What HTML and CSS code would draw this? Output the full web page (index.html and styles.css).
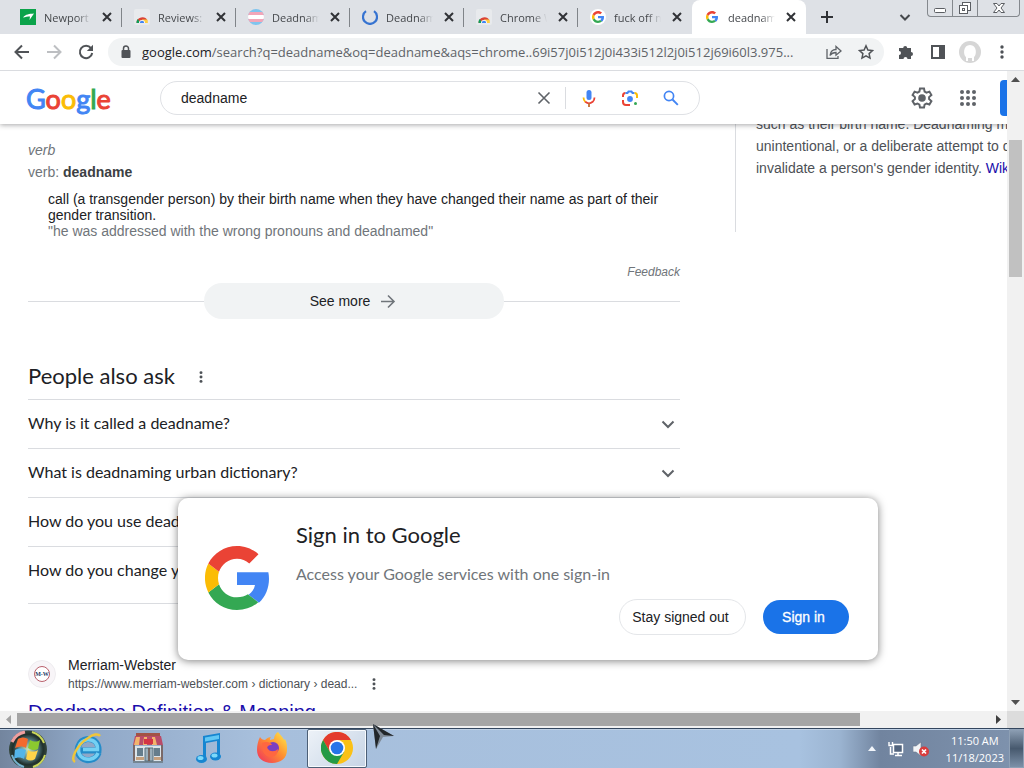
FILE: index.html
```html
<!DOCTYPE html>
<html lang="en">
<head>
<meta charset="utf-8">
<title>deadname - Google Search</title>
<link rel="stylesheet" href="styles.css">
</head>
<body>
<svg width="0" height="0" class="defs" aria-hidden="true">
  <symbol id="g" viewBox="0 0 48 48">
    <path fill="#4285f4" d="M24 19.6h23.5c.3 1.500.5 3.100.5 4.900 0 7-2.500 13.500-7.600 18l-7.700-6c2.500-1.700 4.200-4.200 4.800-7.300H24z"/>
    <path fill="#34a853" d="M24 48c6.500 0 11.900-2.100 15.900-5.800l-7.700-6c-2.100 1.400-4.900 2.300-8.200 2.300-6.300 0-11.600-4.200-13.500-9.900l-8 6.200C6.500 42.600 14.600 48 24 48z"/>
    <path fill="#fbbc05" d="M10.500 28.600c-1-3-1-6.200 0-9.200l-8-6.200c-3.400 6.800-3.400 14.800 0 21.600z"/>
    <path fill="#ea4335" d="M24 9.500c3.500 0 6.700 1.200 9.200 3.600l6.900-6.900C35.900 2.400 30.500 0 24 0 14.600 0 6.500 5.400 2.500 13.200l8 6.200C12.400 13.700 17.700 9.500 24 9.500z"/>
  </symbol>
  <symbol id="x" viewBox="0 0 16 16"><path d="M4 4l8 8M12 4l-8 8" stroke="#303236" stroke-width="2" fill="none"/></symbol>
  <symbol id="store" viewBox="0 0 16 16">
    <rect width="16" height="16" rx="2" fill="#e8eaed"/>
    <path d="M2.500 14a5.800 5.800 0 0 1 11-2.500L8 12z" fill="#db4437"/><path d="M2.500 14a5.800 5.800 0 0 1 1-4l3.500 4z" fill="#0f9d58"/><path d="M8 10.500h5.200a5.800 5.800 0 0 1 .6 3.500H9z" fill="#ffcd40"/>
    <path d="M5 14a3 3 0 0 1 6 0z" fill="#fff"/><path d="M5.800 14a2.200 2.200 0 0 1 4.400 0z" fill="#4285f4"/>
  </symbol>
  <symbol id="dots" viewBox="0 0 16 16"><g fill="#4d5156"><circle cx="8" cy="3" r="1.700"/><circle cx="8" cy="8" r="1.700"/><circle cx="8" cy="13" r="1.700"/></g></symbol>
  <symbol id="chev" viewBox="0 0 16 16"><path d="M2.500 5.500L8 11l5.500-5.500" stroke="#5f6368" stroke-width="2" fill="none"/></symbol>
</svg>

<div class="tabstrip">
  <div class="tab"><svg class="icon16" viewBox="0 0 16 16"><rect width="16" height="16" fill="#0ba34a"/><path d="M3 8.500C6 5 9 5 14 4.500L9.500 11l.5-3.500C7.500 7.500 5.500 8 3 8.500z" fill="#fff"/></svg><span class="tab-title">Newport</span><button class="close" aria-label="Close tab"><svg class="icon16"><use href="#x"/></svg></button></div>
  <div class="tab"><svg class="icon16"><use href="#store"/></svg><span class="tab-title">Reviews:</span><button class="close" aria-label="Close tab"><svg class="icon16"><use href="#x"/></svg></button></div>
  <div class="tab"><svg class="icon16" viewBox="0 0 16 16"><clipPath id="r"><circle cx="8" cy="8" r="8"/></clipPath><g clip-path="url(#r)"><rect width="16" height="16" fill="#7fc4ee"/><rect y="3" width="16" height="10" fill="#f2a6b8"/><rect y="6" width="16" height="4" fill="#fff"/></g></svg><span class="tab-title">Deadnam</span><button class="close" aria-label="Close tab"><svg class="icon16"><use href="#x"/></svg></button></div>
  <div class="tab"><svg class="icon16" viewBox="0 0 16 16"><path d="M4 2.200A7 7 0 1 0 12 2.200" stroke="#3673d1" stroke-width="2.200" fill="none"/></svg><span class="tab-title">Deadnam</span><button class="close" aria-label="Close tab"><svg class="icon16"><use href="#x"/></svg></button></div>
  <div class="tab"><svg class="icon16"><use href="#store"/></svg><span class="tab-title">Chrome W</span><button class="close" aria-label="Close tab"><svg class="icon16"><use href="#x"/></svg></button></div>
  <div class="tab"><svg class="icon16" viewBox="0 0 16 16"><circle cx="8" cy="8" r="8" fill="#fff"/><use href="#g" x="2" y="2" width="12" height="12"/></svg><span class="tab-title">fuck off m</span><button class="close" aria-label="Close tab"><svg class="icon16"><use href="#x"/></svg></button></div>
  <div class="tab active"><svg class="icon16" viewBox="0 0 16 16"><use href="#g" x="2" y="2" width="12" height="12"/></svg><span class="tab-title">deadnam</span><button class="close" aria-label="Close tab"><svg class="icon16"><use href="#x"/></svg></button></div>
  <button class="newtab" aria-label="New tab"><svg class="icon16" viewBox="0 0 16 16"><path d="M8 2v12M2 8h12" stroke="#303236" stroke-width="2"/></svg></button>
  <button class="tabsearch" aria-label="Search tabs"><svg class="icon16" viewBox="0 0 16 16"><path d="M3.500 6L8 10.500 12.500 6" stroke="#45484c" stroke-width="2" fill="none"/></svg></button>
  <div class="winctl">
    <button aria-label="Minimize"><svg width="14" height="14" viewBox="0 0 14 14"><rect x="1.500" y="7.500" width="11" height="4" rx="1" fill="#fff" stroke="#5b5e63"/></svg></button>
    <button aria-label="Restore"><svg width="14" height="14" viewBox="0 0 14 14" fill="#fff" stroke="#5b5e63"><rect x="4.500" y="1.500" width="8" height="8"/><rect x="1.500" y="4.500" width="8" height="8"/><rect x="4.500" y="7.500" width="2" height="2"/></svg></button>
    <button aria-label="Close"><svg width="14" height="14" viewBox="0 0 14 14"><path d="M1.500 2.500h3.500l2 2.500 2-2.500h3.500L9 7l3.500 4.500H9L7 9l-2 2.500H1.500L5 7z" fill="#fff" stroke="#5b5e63"/></svg></button>
  </div>
</div>

<div class="toolbar">
  <button aria-label="Back"><svg class="icon16" viewBox="0 0 16 16"><path d="M15 8H2M8 1.500L1.500 8 8 14.500" stroke="#505357" stroke-width="2" fill="none"/></svg></button>
  <button aria-label="Forward"><svg class="icon16" viewBox="0 0 16 16"><path d="M1 8h13M8 1.500L14.500 8 8 14.500" stroke="#bdbfc2" stroke-width="2" fill="none"/></svg></button>
  <button aria-label="Reload"><svg class="icon16" viewBox="0 0 16 16"><path d="M13 4.200A6.200 6.200 0 1 0 14.200 9" stroke="#505357" stroke-width="2" fill="none"/><path d="M15 .8V7H8.800z" fill="#505357"/></svg></button>
  <div class="omnibox">
    <svg class="icon16" viewBox="0 0 16 16"><rect x="3.500" y="6" width="9" height="8" rx="1" fill="#505357"/><path d="M5.500 6V4.500a2.500 2.500 0 0 1 5 0V6" stroke="#505357" stroke-width="1.500" fill="none"/></svg>
    <span class="url"><b>google.com</b>/search?q=deadname&amp;oq=deadname&amp;aqs=chrome..69i57j0i512j0i433i512l2j0i512j69i60l3.975...</span>
    <button aria-label="Share"><svg class="icon16" viewBox="0 0 16 16" fill="none" stroke="#5f6368" stroke-width="1.300"><path d="M1 5v9.300h11V12"/><path d="M4 11.500c.5-4 2.500-6 6-6V2.500L15 7l-5 4.200V8.500c-2.800 0-4.500.8-6 3z"/></svg></button>
    <button aria-label="Bookmark"><svg class="icon16" viewBox="0 0 16 16"><path d="M8 1.800l1.900 4.200 4.600.5-3.400 3.100.9 4.500L8 11.800l-4 2.300.9-4.500L1.500 6.500 6.100 6z" fill="none" stroke="#505357" stroke-width="1.500"/></svg></button>
  </div>
  <button aria-label="Extensions"><svg class="icon16" viewBox="0 0 16 16"><path d="M1 4h4.200a2 2 0 1 1 4 0H13v4a2 2 0 1 1 0 4v3H9.500a2 2 0 1 0-4 0H1v-4a2 2 0 1 0 0-4z" fill="#505357"/></svg></button>
  <button aria-label="Side panel"><svg class="icon16" viewBox="0 0 16 16"><rect x="2" y="2" width="12" height="12" fill="none" stroke="#505357" stroke-width="2"/><path d="M9 2h5v12H9z" fill="#505357"/></svg></button>
  <button class="profile" aria-label="Profile"><svg width="22" height="22" viewBox="0 0 22 22"><circle cx="11" cy="11" r="11" fill="#d6d6d6"/><path d="M7 20v-4C4 14 4 4 11 4s7 10 4 12v4h-2v-3H9v3z" fill="#fff"/></svg></button>
  <button class="menu" aria-label="Menu"><svg class="icon16"><use href="#dots"/></svg></button>
</div>

<div class="window">
  <div class="viewport">
    <header class="header">
      <a class="logo" href="#" aria-label="Google"><span class="b">G</span><span class="r">o</span><span class="y">o</span><span class="b">g</span><span class="n">l</span><span class="r">e</span></a>
      <form class="search">
        <input type="text" aria-label="Search" value="deadname">
        <button type="button" class="clear" aria-label="Clear"><svg width="16" height="16" viewBox="0 0 16 16"><path d="M2.500 2.500l11 11M13.500 2.500l-11 11" stroke="#5f6368" stroke-width="1.600"/></svg></button>
        <button type="button" aria-label="Voice search"><svg width="18" height="18" viewBox="0 0 18 18" fill="none"><rect x="6.500" y="1" width="5" height="10" rx="2.500" fill="#4285f4"/><path d="M3.500 8.500c0 2 .8 3.500 2 4.500" stroke="#fbbc04" stroke-width="1.800"/><path d="M5.300 12.800c2.200 1.800 5.200 1.800 7.400 0 1-.9 1.800-2.300 1.800-4.300" stroke="#ea4335" stroke-width="1.800"/><path d="M9 14v4" stroke="#c56b31" stroke-width="1.800"/></svg></button>
        <button type="button" aria-label="Search by image"><svg width="18" height="18" viewBox="0 0 18 18" fill="none" stroke-width="2"><path d="M2 8V6.500A2.500 2.500 0 0 1 4.500 4" stroke="#ea4335"/><path d="M4.500 4h2L7.500 2.500h3L11.500 4h2" stroke="#4285f4"/><path d="M13.500 4A2.500 2.500 0 0 1 16 6.500V9" stroke="#fbbc04"/><path d="M2 11v2a3 3 0 0 0 3 3h4" stroke="#ea4335"/><circle cx="9" cy="10" r="2.900" fill="#4285f4"/><circle cx="14.500" cy="14.500" r="1.500" fill="#34a853"/></svg></button>
        <button type="button" aria-label="Google Search"><svg width="16" height="16" viewBox="0 0 16 16"><circle cx="6" cy="6" r="4.600" stroke="#4285f4" stroke-width="1.700" fill="none"/><path d="M9.500 9.500l5.300 5.300" stroke="#4285f4" stroke-width="1.900"/></svg></button>
      </form>
      <div class="tools">
        <button aria-label="Settings"><svg width="22" height="22" viewBox="0 0 22 22"><path d="M9 1.500h4l.6 3 1.900 1.100 2.900-1 2 3.500-2.300 2v2l2.300 2-2 3.400-2.900-1-1.900 1.100-.6 3H9l-.6-3-1.900-1.100-2.900 1-2-3.400 2.300-2v-2l-2.300-2 2-3.500 2.900 1 1.900-1.100z" fill="none" stroke="#5f6368" stroke-width="2"/><circle cx="11" cy="11" r="3.800" fill="#5f6368"/></svg></button>
        <button aria-label="Google apps"><svg width="18" height="18" viewBox="0 0 18 18"><g fill="#5f6368"><circle cx="3" cy="3" r="2"/><circle cx="9" cy="3" r="2"/><circle cx="15" cy="3" r="2"/><circle cx="3" cy="9" r="2"/><circle cx="9" cy="9" r="2"/><circle cx="15" cy="9" r="2"/><circle cx="3" cy="15" r="2"/><circle cx="9" cy="15" r="2"/><circle cx="15" cy="15" r="2"/></g></svg></button>
        <button class="account" aria-label="Sign in"></button>
      </div>
    </header>

    <main class="page">
      <div class="results">
        <section class="definition">
          <p class="pos"><i>verb</i></p>
          <p class="pos">verb: <b>deadname</b></p>
          <p class="sense">call (a transgender person) by their birth name when they have changed their name as part of their gender transition.<br><q>he was addressed with the wrong pronouns and deadnamed</q></p>
          <a class="feedback" href="#">Feedback</a>
          <div class="more"><button>See more <svg width="16" height="16" viewBox="0 0 16 16"><path d="M1 8.500h13M8 2.500l6 6-6 6" stroke="#70757a" stroke-width="1.600" fill="none"/></svg></button></div>
        </section>
        <section class="ask">
          <h2><span>People also ask</span> <svg class="icon16"><use href="#dots" x="1" y="1" width="14" height="14"/></svg></h2>
          <button class="question"><span>Why is it called a deadname?</span><svg class="icon16"><use href="#chev"/></svg></button>
          <button class="question"><span>What is deadnaming urban dictionary?</span><svg class="icon16"><use href="#chev"/></svg></button>
          <button class="question"><span>How do you use deadname?</span><svg class="icon16"><use href="#chev"/></svg></button>
          <button class="question"><span>How do you change your name?</span><svg class="icon16"><use href="#chev"/></svg></button>
        </section>
        <article class="result">
          <div class="source">
            <svg width="28" height="28" viewBox="0 0 28 28"><circle cx="14" cy="14" r="13.500" fill="#f8f5f8" stroke="#eeecef"/><circle cx="14" cy="14" r="7.500" fill="#fff" stroke="#b9606c"/><text x="14" y="16" text-anchor="middle" class="mw">M-W</text></svg>
            <div><div class="site">Merriam-Webster</div><cite>https://www.merriam-webster.com › dictionary › dead... <svg class="icon16"><use href="#dots" x="1" y="1" width="14" height="14"/></svg></cite></div>
          </div>
          <h3><a href="#">Deadname Definition &amp; Meaning</a></h3>
        </article>
      </div>
      <aside class="panel"><p>such as their birth name. Deadnaming may be<br>unintentional, or a deliberate attempt to deny, mock, or<br>invalidate a person's gender identity. <a href="#">Wikipedia</a></p></aside>
    </main>

    <div class="dialog" role="dialog" aria-labelledby="signin-title">
      <svg class="biglogo" width="64" height="64"><use href="#g"/></svg>
      <div class="dialog-body">
        <h2 id="signin-title">Sign in to Google</h2>
        <p>Access your Google services with one sign-in</p>
        <div class="actions"><button class="plain">Stay signed out</button><button class="primary">Sign in</button></div>
      </div>
    </div>
  </div>
  <div class="vscroll"><svg width="9" height="5" viewBox="0 0 9 5"><path d="M0 5L4.500 0 9 5z" fill="#505050"/></svg><div class="thumb"></div><svg width="9" height="5" viewBox="0 0 9 5"><path d="M0 0L4.500 5 9 0z" fill="#505050"/></svg></div>
  <div class="hscroll"><svg width="5" height="9" viewBox="0 0 5 9"><path d="M5 0L0 4.500 5 9z" fill="#a3a3a3"/></svg><div class="thumb"></div><svg width="5" height="9" viewBox="0 0 5 9"><path d="M0 0l5 4.500L0 9z" fill="#404040"/></svg></div>
  <div class="corner"></div>
</div>

<footer class="taskbar">
  <button class="start" aria-label="Start"><svg width="40" height="40" viewBox="0 0 40 40"><defs><radialGradient id="orb"><stop offset="0" stop-color="#c9e6bb"/><stop offset=".5" stop-color="#567e86"/><stop offset=".8" stop-color="#20302c"/><stop offset="1" stop-color="#34463c"/></radialGradient></defs><circle cx="20" cy="20.500" r="19" fill="url(#orb)"/><path d="M4 13A18 18 0 0 1 17 3" stroke="#ef9fa0" stroke-width="3" fill="none"/><path d="M24 3a18 18 0 0 1 12 11M37 26a18 18 0 0 1-12 12" stroke="#cbd75a" stroke-width="2" fill="none"/><path d="M4 26a18 18 0 0 0 12 12" stroke="#75b3cf" stroke-width="2" fill="none"/><path d="M10 10c4-2 7-2 10 0l-2 9c-3-2-7-2-11 0z" fill="#f36a2e"/><path d="M22 11c4 2 7 2 10 0l-2 9c-3 2-7 1-10-1z" fill="#8bc92f"/><path d="M7 21c4-2 7-2 11 0l-2 9c-3-2-7-2-10 0z" fill="#54b5e8"/><path d="M20 21c3 2 7 2 10 0l-3 9c-3 2-6 2-9 0z" fill="#ffd34a"/></svg></button>
  <button class="app" aria-label="Internet Explorer"><svg width="32" height="32" viewBox="0 0 32 32" fill="none"><path d="M27.500 21C25 28.500 15 30.500 9.500 25 4 19 7 8 16.500 7c7.500-.5 11.500 5 11 11.500H10" stroke="#248cc9" stroke-width="6"/><path d="M27 21C24.500 27.500 15.500 29.500 10 24.500 5 19 7.500 9 16.500 7.800c7-.5 10.500 4.500 10 9.700H12" stroke="#74d0f3" stroke-width="3.500"/><path d="M4 30C-1 27 6 13 17 6c5-3.500 10-5 12-2" stroke="#efc53a" stroke-width="2.500"/></svg></button>
  <button class="app" aria-label="Store"><svg width="32" height="32" viewBox="0 0 32 32"><path d="M3 14h26v15H3z" fill="#dce4e9"/><path d="M1 29h30v2H1z" fill="#758693"/><path d="M4 1h24v4H4z" fill="#a35245"/><path d="M3 4h26l2 9H1z" fill="#b94b68"/><path d="M4 5h4l-1 8H2zm8 0h3v8h-4zm8 0h3l2 8h-5z" fill="#f3b46c"/><path d="M12 7h9v5h-9z" fill="#d33445"/><path d="M5 16h6v8H5zm17 0h6v8h-6z" fill="#657d8c"/><path d="M13 16h8v13h-8z" fill="#9aaeba" stroke="#596e7c"/><path d="M17 16v13M2 13v16M30 13v16" stroke="#6f5146" stroke-width="1.500"/><path d="M4 25h8v3H4zm18 0h7v3h-7z" fill="#c5a07e"/></svg></button>
  <button class="app" aria-label="Music"><svg width="32" height="32" viewBox="0 0 32 32"><path d="M10 4l17-3v23h-3V9l-11 2v17h-3z" fill="#1686d1"/><path d="M12 5.500L26 3v4L12 9.500z" fill="#61c7f5"/><ellipse cx="8.500" cy="27" rx="5.500" ry="4" fill="#1686d1"/><ellipse cx="22.500" cy="24.500" rx="5.500" ry="4" fill="#1686d1"/><ellipse cx="7.500" cy="26" rx="3" ry="2" fill="#7cd9fa"/><ellipse cx="21.500" cy="23.500" rx="3" ry="2" fill="#7cd9fa"/></svg></button>
  <button class="app wide" aria-label="Firefox"><svg width="32" height="32" viewBox="0 0 32 32"><defs><linearGradient id="fx" x1="1" y1="0" x2="0" y2="1"><stop offset="0" stop-color="#fff04c"/><stop offset=".45" stop-color="#ff9130"/><stop offset="1" stop-color="#ef2d61"/></linearGradient></defs><path d="M4 5c1 2 3 3 5 3 2-2 4-3 6-3-1 1-1 2-1 3l4-1c0-3 2-6 4-7 2 3 5 5 6 8l1-1c2 4 2 7 2 11 0 8-6 13-15 13S1 26 1 18C1 13 2 9 4 5z" fill="url(#fx)"/><circle cx="17" cy="16" r="6" fill="#7b3fc0"/><path d="M6 11c4-2 9-1 10 2-4 0-6 2-4 4 2 3 7 3 10 0 0 5-3 8-7 8-6 0-10-6-9-14z" fill="#ff6740"/></svg></button>
  <button class="app current" aria-label="Chrome"><svg width="32" height="32" viewBox="0 0 32 32"><circle cx="16" cy="16" r="16" fill="#fbc116"/><path d="M2.100 8A16 16 0 0 1 29.900 8H16L9 20z" fill="#e33b2e"/><path d="M2.100 8A16 16 0 0 0 16 32l7-12H9z" fill="#249a46"/><circle cx="16" cy="16" r="8" fill="#fff"/><circle cx="16" cy="16" r="6.300" fill="#2674e8"/></svg></button>
  <div class="tray">
    <svg width="8" height="5" viewBox="0 0 8 5"><path d="M0 5l4-5 4 5z" fill="#f2f6fb"/></svg>
    <svg width="16" height="16" viewBox="0 0 16 16" fill="none"><rect x="5.500" y="3.500" width="9" height="8" fill="#52647e" stroke="#fff" stroke-width="1.500"/><path d="M7 14.500h7M10 12v2M2.500 6v7H6" stroke="#fff" stroke-width="1.500"/><path d="M1 1v3.500h3.500V1" stroke="#fff" stroke-width="1.400"/></svg>
    <svg width="16" height="16" viewBox="0 0 16 16"><path d="M0 5h3l5-4v14l-5-4H0z" fill="#f2f4f7" stroke="#68758a" stroke-width=".6"/><circle cx="11" cy="10.500" r="5" fill="#d83c3c"/><path d="M9 8.500l4 4M13 8.500l-4 4" stroke="#fff" stroke-width="1.700"/></svg>
    <div class="clock"><span>11:50 AM</span><span>11/18/2023</span></div>
  </div>
  <button class="desktop" aria-label="Show desktop"></button>
</footer>
<svg class="cursor" width="24" height="28" viewBox="0 0 24 28"><path d="M1 1l21 12-11 1-7 12z" fill="#7f8a97"/><path d="M1 1l21 12-10-1zM1 1l3 25 4-13z" fill="#22272b"/></svg>
</body>
</html>
```
FILE: styles.css
```css
* { box-sizing: border-box; }
body { margin: 0; height: 100vh; display: flex; flex-direction: column; overflow: hidden; background: #fff; color: #202124; font-family: "Liberation Sans", Arial, sans-serif; font-size: 14px; }
button { border: 0; padding: 0; background: none; color: inherit; font: inherit; display: flex; align-items: center; justify-content: center; }
svg { display: block; flex: none; }
h2, h3, p { margin: 0; font-weight: 400; }
a { text-decoration: none; color: #1a0dab; }
.defs { position: absolute; }
.icon16 { width: 16px; height: 16px; }

/* Tab strip */
.tabstrip { flex: none; height: 34px; display: flex; background: #dee1e6; padding-left: 8px; font: 11px "Open Sans", sans-serif; color: #45484c; }
.tab { flex: 0 1 114px; min-width: 0; display: flex; align-items: center; gap: 8px; padding: 0 7px 0 12px; background: linear-gradient(#808489, #808489) right center / 1px 19px no-repeat; }
.tab:nth-child(6) { background: none; }
.tab-title { flex: 1; min-width: 0; overflow: hidden; white-space: nowrap; mask-image: linear-gradient(90deg, #000 70%, transparent); }
.active { background: #fff; border-radius: 8px 8px 0 0; }
.newtab { width: 42px; }
.tabsearch { margin-left: auto; margin-right: 14px; }
.winctl { display: flex; height: 17px; margin-right: 4px; border: 1px solid #84888d; border-top: 0; border-radius: 0 0 4px 4px; }
.winctl button { width: 25px; border-right: 1px solid #84888d; }
.winctl button:last-child { width: 41px; border: 0; }

/* Address bar */
.toolbar { flex: none; height: 37px; display: flex; align-items: center; gap: 16px; padding: 0 14px; border-bottom: 1px solid #dadce0; }
.omnibox { flex: 1; min-width: 0; height: 28px; display: flex; align-items: center; gap: 8px; padding: 0 10px; margin: 0 -2px 0 -2px; border-radius: 14px; background: #f1f3f4; font: 13px "Open Sans", sans-serif; color: #5f6368; }
.omnibox button { margin-left: 8px; }
.url { flex: 1; min-width: 0; overflow: hidden; white-space: nowrap; }
.url b { font-weight: 400; color: #202124; }
.profile { margin: 0 -3px; }

/* Browser window */
.window { flex: 1; min-height: 0; display: grid; grid-template: 1fr 17px / 1fr 17px; }
.viewport { position: relative; overflow: hidden; min-width: 0; }
.header { position: absolute; inset: 0 0 auto; z-index: 1; height: 53px; display: flex; align-items: center; padding-left: 26px; background: #fff; box-shadow: 0 1px 5px rgba(32, 33, 36, .4); }
.logo { width: 134px; padding-top: 2px; font: 27px Lato, sans-serif; -webkit-text-stroke: 1px; }
.b { color: #4285f4; } .r { color: #ea4335; } .y { color: #fbbc05; } .n { color: #34a853; }
.search { flex: 0 1 540px; min-width: 0; height: 34px; display: flex; align-items: center; padding: 0 8px 0 20px; border: 1px solid #dfe1e5; border-radius: 17px; }
.search input { flex: 1; min-width: 0; border: 0; outline: 0; padding: 0; background: none; font: inherit; color: #202124; }
.search button { width: 41px; }
.search .clear { width: 44px; height: 22px; margin-right: 2px; border-right: 1px solid #dadce0; }
.tools { margin-left: auto; display: flex; align-items: center; gap: 26px; }
.tools .account { width: 7px; height: 36px; border-radius: 4px 0 0 4px; background: #1a73e8; margin-left: -3px; }

.page { display: flex; padding-left: 28px; }
.results { flex: 0 0 652px; padding-top: 68px; }
.pos { line-height: 22px; color: #70757a; }
.pos b { color: #3c4043; }
.sense { padding: 8px 0 0 20px; line-height: 16px; }
.sense q { color: #70757a; quotes: '"' '"'; }
.feedback { display: block; margin-top: 26px; text-align: right; font-size: 12px; font-style: italic; line-height: 14px; color: #70757a; }
.more { display: flex; align-items: center; margin-top: 4px; }
.more::before, .more::after { content: ""; flex: 1; height: 1px; background: #dadce0; }
.more button { width: 300px; height: 36px; gap: 10px; border-radius: 18px; padding-right: 2px; background: #f1f3f4; }
.ask { padding-top: 44px; font-family: Lato, sans-serif; }
.ask span { padding-bottom: 3px; }
.ask h2 { display: flex; align-items: center; gap: 18px; height: 28px; font-size: 22px; margin-bottom: 8px; }
.question { width: 100%; height: 49px; justify-content: space-between; padding-right: 4px; border-top: 1px solid #dadce0; font-size: 16px; }
.question:last-child { height: 58px; padding-bottom: 8px; border-bottom: 1px solid #dadce0; }
.result { padding-top: 51px; }
.source { display: flex; align-items: center; gap: 12px; }
.mw { font: bold 6px "Liberation Serif", serif; fill: #263c66; }
.site { line-height: 20px; }
cite { display: flex; align-items: center; gap: 9px; font-size: 12px; font-style: normal; line-height: 18px; color: #4d5156; }
h3 { font-size: 20px; line-height: 26px; margin-top: 6px; }
.panel { align-self: flex-start; margin-left: 55px; padding: 42px 0 53px 20px; border-left: 1px solid #dadce0; white-space: nowrap; line-height: 22px; color: #4d5156; }

/* Sign-in prompt */
.dialog { position: absolute; left: 178px; bottom: 51px; width: 700px; display: flex; align-items: center; gap: 27px; padding: 23px 29px 25px 27px; border-radius: 10px; background: #fff; box-shadow: 0 1px 8px rgba(0, 0, 0, .5); }
.dialog-body { flex: 1; font-family: Lato, sans-serif; }
.dialog h2 { font-size: 22px; line-height: 28px; }
.dialog p { margin: 14px 0 15px; font-size: 16px; line-height: 21px; color: #70757a; }
.actions { display: flex; justify-content: flex-end; align-items: center; gap: 17px; font-family: "Liberation Sans", Arial, sans-serif; }
.plain { width: 127px; height: 36px; border: 1px solid #e4e6e9; border-radius: 18px; padding-right: 4px; }
.primary { width: 86px; height: 34px; border-radius: 17px; background: #1a73e8; color: #fff; padding-right: 5px; -webkit-text-stroke: 0.3px; }

/* Scroll bars */
.vscroll, .hscroll { display: flex; align-items: center; background: #f1f1f1; }
.vscroll { flex-direction: column; padding: 6px 0; }
.hscroll { padding: 0 6px; }
.vscroll .thumb { width: 13px; height: 137px; margin: 58px 0 auto; background: #c1c1c1; }
.hscroll .thumb { width: 843px; height: 13px; margin: 0 auto 0 6px; background: #a5a5a5; }
.corner { background: #dcdcdc; }

/* Task bar */
.taskbar { flex: none; height: 40px; display: flex; align-items: stretch; border-top: 1px solid #33465e; background: linear-gradient(90deg, #73859e, #8fa7c6 8%, #a7bfdc 25%, #a8c2e0 78%, #9bb4d1 82%, #71849f 86%, #7f93ae); box-shadow: inset 0 1px #bfd1e6; }
.start { width: 56px; overflow: hidden; }
.app { width: 61px; padding-bottom: 2px; }
.app.wide { width: 66px; }
.app.current { width: 60px; margin-left: 2px; border: 1px solid #4c5f76; border-radius: 2px; background: linear-gradient(135deg, #edf2f8, #c6d4e5); box-shadow: inset 0 0 0 1px #f7fafd; }
.tray { margin-left: auto; display: flex; align-items: center; gap: 12px; font: 11px/17px "Open Sans", sans-serif; color: #fff; }
.tray svg + svg { margin-right: -3px; }
.clock { display: flex; flex-direction: column; align-items: center; margin: 1px 5px 0 8px; }
.desktop { width: 15px; border: 1px solid #8ea0b5; background: linear-gradient(#8c9eb3, #47596e 50%, #7c90a8); }
.cursor { position: absolute; left: 372px; top: 723px; }
```
